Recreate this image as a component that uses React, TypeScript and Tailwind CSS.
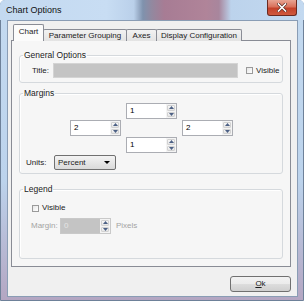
import React from "react"

const arrowUp = (
  <svg width="5" height="3" viewBox="0 0 5 3">
    <path d="M0 3 L2.5 0 L5 3 Z" fill="#4d6185" />
  </svg>
)
const arrowDown = (
  <svg width="5" height="3" viewBox="0 0 5 3">
    <path d="M0 0 L2.5 3 L5 0 Z" fill="#4d6185" />
  </svg>
)

function Spin({ value, disabled = false }: { value: string; disabled?: boolean }) {
  return (
    <div
      className={
        disabled
          ? "flex h-[16px] w-[51px] border border-[#c9c9c9] bg-[#c4c4c4]"
          : "flex h-[16px] w-[51px] border border-[#abadb3] bg-white"
      }
    >
      <div
        className={
          disabled
            ? "flex-1 pl-[3px] leading-[14px] text-[#e4e4e4]"
            : "flex-1 pl-[3px] leading-[14px] text-black"
        }
      >
        {value}
      </div>
      <div className="flex w-[10px] flex-col gap-px bg-[#f4f4f4] p-px">
        <div className="flex flex-1 items-center justify-center rounded-[1px] border border-[#d2d2d2] bg-gradient-to-b from-[#f8f8f8] to-[#e4e4e4]">
          {arrowUp}
        </div>
        <div className="flex flex-1 items-center justify-center rounded-[1px] border border-[#d2d2d2] bg-gradient-to-b from-[#f8f8f8] to-[#e4e4e4]">
          {arrowDown}
        </div>
      </div>
    </div>
  )
}

function Check({ label }: { label: string }) {
  return (
    <div className="flex items-center gap-[3px]">
      <span className="block h-[7px] w-[7px] border border-[#9a9a9a] bg-gradient-to-br from-[#e6e6e6] to-white" />
      <span>{label}</span>
    </div>
  )
}

export default function App() {
  return (
    <div className="font-['Liberation_Sans',Arial,sans-serif] text-[8px] text-[#1b1b1b]">
      <div className="flex h-[301px] w-[304px] flex-col rounded-t-[5px] border border-[#6e8199] bg-[linear-gradient(180deg,#c4daf0_0%,#bcd3ec_60%,#b4a6c2_100%)]">
        {/* title bar */}
        <div className="-mx-px -mt-px flex h-[20px] shrink-0 items-start justify-between rounded-t-[5px] bg-[linear-gradient(90deg,#c3d9f0_0%,#c8ddf3_35%,#bad0ea_44%,#7f92ad_47%,#93889f_50%,#a77c94_54%,#b08499_68%,#a8869d_72%,#bcd3ec_76%,#c3d9f0_100%)] pl-[6px]">
          <span className="mt-[4px] text-[9px] leading-[12px] text-[#111]">Chart Options</span>
          <div className="mr-[7px] flex h-[16px] w-[30px] items-center justify-center rounded-b-[3px] border border-t-0 border-[#6b2a20] bg-[linear-gradient(180deg,#e8a493_0%,#d9715b_45%,#c4412a_55%,#cf5a3e_100%)]">
            <svg width="10" height="9" viewBox="0 0 10 9">
              <path d="M1.5 1 L8.5 8 M8.5 1 L1.5 8" stroke="#5a2a22" strokeWidth="3" strokeLinecap="square" />
              <path d="M1.5 1 L8.5 8 M8.5 1 L1.5 8" stroke="#ffffff" strokeWidth="1.6" strokeLinecap="square" />
            </svg>
          </div>
        </div>

        {/* client area */}
        <div className="ml-[6px] mr-[5px] mb-[3px] flex flex-1 flex-col border border-[#8a9db5] bg-[#f0f0f0] pl-[3px] pr-[6px] pt-[4px]">
          {/* tabs */}
          <div className="relative z-10 flex h-[16px] items-end">
            <div className="ml-[2px] flex h-[17px] w-[31px] items-center justify-center rounded-t-[2px] border border-b-0 border-[#898c95] bg-[#fbfbfb] pb-[2px]">
              Chart
            </div>
            <div className="-ml-px flex h-[12px] w-[84px] items-center justify-center rounded-t-[2px] border border-b-0 border-[#898c95] bg-gradient-to-b from-[#f2f2f2] to-[#e3e3e3]">
              Parameter Grouping
            </div>
            <div className="-ml-px flex h-[12px] w-[31px] items-center justify-center rounded-t-[2px] border border-b-0 border-[#898c95] bg-gradient-to-b from-[#f2f2f2] to-[#e3e3e3]">
              Axes
            </div>
            <div className="-ml-px flex h-[12px] w-[86px] items-center justify-center rounded-t-[2px] border border-b-0 border-[#898c95] bg-gradient-to-b from-[#f2f2f2] to-[#e3e3e3]">
              Display Configuration
            </div>
          </div>

          {/* tab page */}
          <div className="-mt-px flex h-[227px] flex-col border border-[#898c95] bg-[#f6f6f6] px-[7px]">
            <fieldset className="mt-[9px] h-[33px] rounded-[3px] border border-[#d5d9dd] pl-px shadow-[inset_1px_1px_0_#ffffff]">
              <legend className="ml-[2px] px-px text-[8.5px] leading-[11px]">General Options</legend>
              <div className="mt-[2px] flex items-center pl-[11px]">
                <span className="w-[21px]">Title:</span>
                <div className="h-[15px] w-[185px] border border-[#d4d4d4] bg-[#c4c4c4]" />
                <div className="ml-[8px]">
                  <Check label="Visible" />
                </div>
              </div>
            </fieldset>

            <fieldset className="mt-[5px] h-[86px] rounded-[3px] border border-[#d5d9dd] pl-px shadow-[inset_1px_1px_0_#ffffff]">
              <legend className="ml-[2px] px-px text-[8.5px] leading-[11px]">Margins</legend>
              <div className="mt-[4px] flex flex-col gap-px">
                <div className="flex justify-center">
                  <Spin value="1" />
                </div>
                <div className="flex justify-center gap-[61px]">
                  <Spin value="2" />
                  <Spin value="2" />
                </div>
                <div className="flex justify-center">
                  <Spin value="1" />
                </div>
              </div>
              <div className="mt-[2px] flex items-center pl-[5px]">
                <span className="w-[28px]">Units:</span>
                <div className="flex h-[15px] w-[62px] items-center justify-between rounded-[2px] border border-[#707070] bg-gradient-to-b from-[#f3f3f3] to-[#dadada] pl-[3px] pr-[5px]">
                  <span>Percent</span>
                  <svg width="6" height="3" viewBox="0 0 6 3">
                    <path d="M0 0 L3 3 L6 0 Z" fill="#000" />
                  </svg>
                </div>
              </div>
            </fieldset>

            <fieldset className="mt-[10px] h-[75px] rounded-[3px] border border-[#d5d9dd] pl-px shadow-[inset_1px_1px_0_#ffffff]">
              <legend className="ml-[2px] px-px text-[8.5px] leading-[11px]">Legend</legend>
              <div className="mt-[7px] pl-[11px]">
                <Check label="Visible" />
              </div>
              <div className="mt-[4px] flex items-center pl-[10px] text-[#a3a3a3]">
                <span className="w-[29px]">Margin:</span>
                <Spin value="0" disabled />
                <span className="ml-[5px]">Pixels</span>
              </div>
            </fieldset>
          </div>

          {/* buttons */}
          <div className="mt-[9px] flex justify-end">
            <div className="flex h-[16px] w-[61px] items-center justify-center rounded-[3px] border border-[#707070] bg-[linear-gradient(180deg,#f2f2f2_0%,#ebebeb_50%,#dddddd_51%,#cfcfcf_100%)]">
              <span>
                <span className="underline">O</span>k
              </span>
            </div>
          </div>
        </div>
      </div>
    </div>
  )
}
